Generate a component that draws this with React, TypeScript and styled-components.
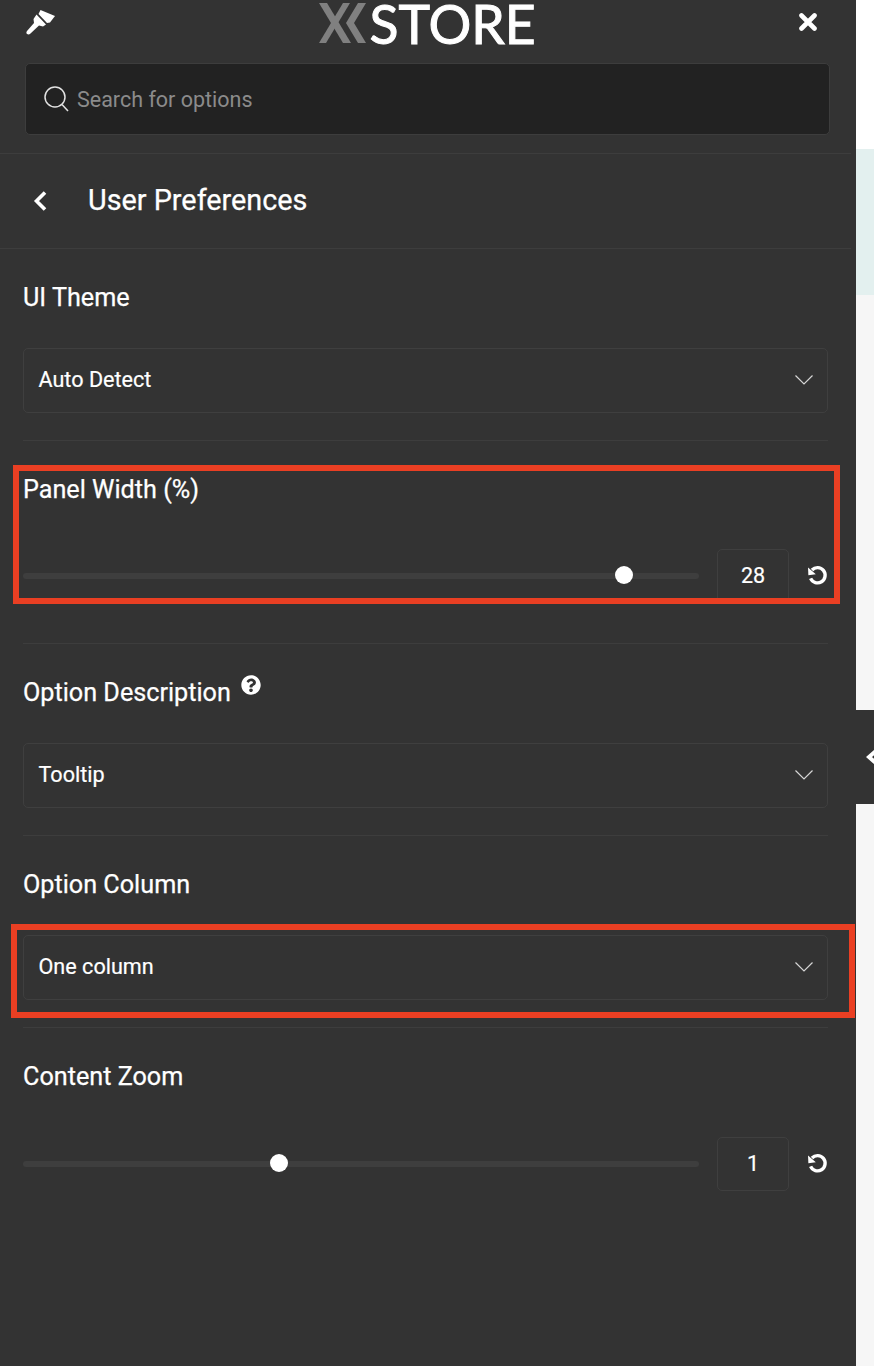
import styled, { createGlobalStyle } from "styled-components";

const GlobalStyle = createGlobalStyle`
  html, body {
    margin: 0;
    padding: 0;
    background: #fff;
  }
  * {
    box-sizing: border-box;
  }
`

const Page = styled.div`
  display: flex;
  width: 874px;
  height: 1366px;
  overflow: hidden;
  font-family: Roboto, "Liberation Sans", sans-serif;
`

const Panel = styled.div`
  position: relative;
  width: 856px;
  height: 100%;
  background: #333333;
  color: #fff;
`

const Aside = styled.div`
  display: flex;
  flex-direction: column;
  flex: 1;
  height: 100%;
  overflow: hidden;
`

const Stripe = styled.div<{ $height?: number, $color: string }>`
  ${({ $height }) => $height ? `height: ${$height}px;` : "flex: 1;"}
  background: ${({ $color }) => $color};
`

const Tab = styled.div`
  display: flex;
  align-items: center;
  height: 94px;
  padding-left: 10px;
  background: #333333;
  color: #fff;

  svg {
    flex: none;
  }
`

const TopBar = styled.div`
  display: flex;
  justify-content: space-between;
  align-items: flex-start;
  height: 63px;
  padding: 3px 39px 0 23px;
`

const BrushIcon = styled.svg`
  width: 33px;
  height: 28px;
  margin: 6px -3px 0 0;
  fill: #fff;
`

const CloseIcon = styled.svg`
  width: 18px;
  height: 18px;
  margin-top: 10px;
  stroke: #fff;
  stroke-width: 4.6;
  stroke-linecap: round;
  fill: none;
`

const Logo = styled.div`
  display: flex;
  align-items: center;
  gap: 3px;
  width: 215px;
  height: 40px;
`

const LogoMark = styled.svg`
  flex: none;
  width: 48px;
  height: 40px;
  fill: #808080;
`

const LogoText = styled.span`
  font-family: Lato, sans-serif;
  font-size: 53.5px;
  line-height: 40px;
  font-weight: 400;
  color: #fff;
  -webkit-text-stroke: 1px #fff;
`

const SearchWrap = styled.div`
  padding: 0 26px 18px 25px;
  border-bottom: 1px solid #3d3d3d;
  margin-right: 5px;
`

const SearchBox = styled.div`
  display: flex;
  align-items: center;
  gap: 8px;
  height: 72px;
  padding: 0 18px;
  background: #222222;
  border: 1px solid #3d3d3d;
  border-radius: 5px;
  margin-right: -5px;
`

const SearchIcon = styled.svg`
  width: 25px;
  height: 26px;
  stroke: #e2e2e2;
  stroke-width: 1.5;
  fill: none;
`

const SearchText = styled.span`
  font-size: 21.5px;
  color: #8b8b8b;
`

const BackRow = styled.div`
  display: flex;
  align-items: center;
  gap: 41px;
  height: 95px;
  padding-left: 33px;
  border-bottom: 1px solid #3d3d3d;
  margin-right: 5px;
`

const BackIcon = styled.svg`
  width: 14px;
  height: 20px;
  stroke: #fff;
  stroke-width: 3.6;
  fill: none;
`

const Title = styled.div`
  margin-top: -2px;
  font-size: 28.8px;
  font-weight: 400;
  -webkit-text-stroke: 0.25px #fff;
`

const Sections = styled.div`
  padding: 0 28px 0 23px;
`

const Section = styled.div<{ $pad: number }>`
  padding-bottom: ${({ $pad }) => $pad}px;
  border-bottom: 1px solid ${({ $pad }) => $pad ? "#3d3d3d" : "transparent"};
`

const LabelRow = styled.div`
  display: flex;
  align-items: flex-start;
  height: 32px;
  margin: 32px 0 0;
`

const Label = styled.div`
  font-size: 25.2px;
  line-height: 34px;
  -webkit-text-stroke: 0.25px #fff;
`

const HelpIcon = styled.svg`
  width: 20px;
  height: 20px;
  margin: -1px 0 0 10px;
  fill: #fff;
`

const Select = styled.div`
  display: flex;
  align-items: center;
  justify-content: space-between;
  height: 65px;
  margin-top: 35px;
  padding: 0 14px 3px 14.5px;
  border: 1px solid #3f3f3f;
  border-radius: 5px;
  font-size: 21.6px;
  -webkit-text-stroke: 0.2px #fff;
`

const ChevronIcon = styled.svg`
  width: 18px;
  height: 10px;
  margin-top: 2px;
  stroke: #d6d6d6;
  stroke-width: 1.2;
  fill: none;
`

const SliderRow = styled.div<{ $top: number }>`
  display: flex;
  align-items: center;
  height: 54px;
  margin-top: ${({ $top }) => $top}px;
`

const Track = styled.div`
  position: relative;
  flex: 1;
  height: 6px;
  background: #3e3e3e;
  border-radius: 3px;
`

const Thumb = styled.div`
  position: absolute;
  top: -7px;
  width: 18px;
  height: 18px;
  margin-left: -9px;
  background: #fff;
  border-radius: 50%;
`

const ValueBox = styled.div`
  display: flex;
  align-items: center;
  justify-content: center;
  width: 72px;
  height: 54px;
  margin: 0 18px;
  padding-bottom: 1px;
  border: 1px solid #3f3f3f;
  border-radius: 5px;
  font-size: 21.5px;
  -webkit-text-stroke: 0.2px #fff;
`

const ResetIcon = styled.svg`
  width: 21px;
  height: 21px;
  margin-top: -2px;
  stroke: #fff;
  stroke-width: 3.4;
  fill: none;
`

const Highlight = styled.div<{ $top: number, $left: number, $width: number, $height: number }>`
  position: absolute;
  top: ${({ $top }) => $top}px;
  left: ${({ $left }) => $left}px;
  width: ${({ $width }) => $width}px;
  height: ${({ $height }) => $height}px;
  border: 6px solid #ea3f23;
  pointer-events: none;
`

const Reset = () => (
  <ResetIcon viewBox="0 0 21 21">
    <path d="M5 5 A7.6 7.6 0 1 1 3.6 13.4" />
    <path d="M1 2.4 L1.4 10.2 L8.8 9.2 Z" fill="#fff" stroke="none" />
  </ResetIcon>
)

const Slider = ({ value, percent, top }: { value: string, percent: number, top: number }) => (
  <SliderRow $top={top}>
    <Track>
      <Thumb style={{ left: `${percent}%` }} />
    </Track>
    <ValueBox>{value}</ValueBox>
    <Reset />
  </SliderRow>
)

const Dropdown = ({ value }: { value: string }) => (
  <Select>
    {value}
    <ChevronIcon viewBox="0 0 18 10">
      <path d="M0.5 0.5 L9 9 L17.5 0.5" />
    </ChevronIcon>
  </Select>
)

export default function App() {
  return (
    <Page>
      <GlobalStyle />
      <Panel>
        <TopBar>
          <BrushIcon viewBox="0 0 33 28">
            <path d="M17.5 1 L32 7 L27 13.5 L24 14 L15.5 5 Z" />
            <path d="M13.5 5.5 L23 15.5 L20 17.5 L16 16.5 L7.5 24.5 C5.5 26.5 2 25 4 22 L11 14 L10.5 10 Z" />
          </BrushIcon>
          <Logo>
            <LogoMark viewBox="0 0 48 40">
              <path d="M0 0 H8 L32 40 H24 Z" />
              <path d="M24 0 H31 L7 40 H0 Z" />
              <path d="M39 0 H47 L35 20 L47 40 H39 L27 20 Z" />
            </LogoMark>
            <LogoText>STORE</LogoText>
          </Logo>
          <CloseIcon viewBox="0 0 18 18">
            <path d="M2.5 2.5 L15.5 15.5 M15.5 2.5 L2.5 15.5" />
          </CloseIcon>
        </TopBar>
        <SearchWrap>
          <SearchBox>
            <SearchIcon viewBox="0 0 25 26">
              <circle cx="11" cy="11" r="10" />
              <path d="M18 18.5 L24 25" />
            </SearchIcon>
            <SearchText>Search for options</SearchText>
          </SearchBox>
        </SearchWrap>
        <BackRow>
          <BackIcon viewBox="0 0 14 20">
            <path d="M12 1.5 L3.5 10 L12 18.5" />
          </BackIcon>
          <Title>User Preferences</Title>
        </BackRow>
        <Sections>
          <Section $pad={27}>
            <LabelRow><Label>UI Theme</Label></LabelRow>
            <Dropdown value="Auto Detect" />
          </Section>
          <Section $pad={40}>
            <LabelRow><Label>Panel Width (%)</Label></LabelRow>
            <Slider value="28" percent={88.9} top={44} />
          </Section>
          <Section $pad={27}>
            <LabelRow>
              <Label>Option Description</Label>
              <HelpIcon viewBox="0 0 512 512">
                <path d="M504 256c0 137-111 248-248 248S8 393 8 256 119 8 256 8s248 111 248 248zM263 90c-54 0-89 23-116 64-4 5-3 12 3 16l35 26c5 4 13 3 17-2 18-23 30-36 58-36 21 0 46 13 46 33 0 15-12 23-33 34-24 14-56 31-56 73v7c0 7 5 12 12 12h56c7 0 12-5 12-12v-2c0-29 85-30 85-109 0-60-62-104-119-104zm-7 254c-26 0-47 21-47 47s21 47 47 47 47-21 47-47-21-47-47-47z" />
              </HelpIcon>
            </LabelRow>
            <Dropdown value="Tooltip" />
          </Section>
          <Section $pad={27}>
            <LabelRow><Label>Option Column</Label></LabelRow>
            <Dropdown value="One column" />
          </Section>
          <Section $pad={0}>
            <LabelRow><Label>Content Zoom</Label></LabelRow>
            <Slider value="1" percent={37.9} top={45} />
          </Section>
        </Sections>
        <Highlight $top={465} $left={13} $width={827} $height={139} />
        <Highlight $top={924} $left={11} $width={844} $height={94} />
      </Panel>
      <Aside>
        <Stripe $height={149} $color="#ffffff" />
        <Stripe $height={146} $color="#e3f0ef" />
        <Stripe $height={415} $color="#f6f6f6" />
        <Tab>
          <svg width="16" height="20" viewBox="0 0 16 20" fill="none" stroke="#fff" strokeWidth="4">
            <path d="M12 2 L3 10 L12 18" />
          </svg>
        </Tab>
        <Stripe $color="#f6f6f6" />
      </Aside>
    </Page>
  )
}
